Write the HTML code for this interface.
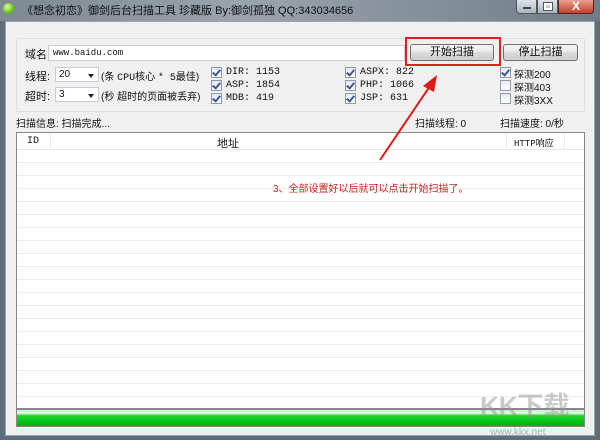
<!DOCTYPE html>
<html><head><meta charset="utf-8"><style>
*{margin:0;padding:0;box-sizing:border-box}
body{width:600px;height:440px;overflow:hidden;background:#5f6d7a;font-family:"Liberation Sans","Noto Sans CJK SC",sans-serif;font-size:11px;color:#111;position:relative}
.a{position:absolute;white-space:nowrap}
.mono{font-family:"Liberation Mono","Noto Sans CJK SC",monospace;font-size:10px}
.cb{position:absolute;width:11px;height:11px;border:1px solid #8f9aa6;background:linear-gradient(#e6e9ee,#fff)}
.cb.on::after{content:"";position:absolute;left:2px;top:0px;width:3px;height:6px;border:solid #3a5a96;border-width:0 2px 2px 0;transform:rotate(40deg)}
.btn{position:absolute;border:1px solid #707070;border-radius:3px;background:linear-gradient(#f6f6f6 0%,#e6e6e6 50%,#d8d8d8 51%,#cfcfcf 100%);text-align:center;font-size:11px;line-height:15px}
.sel{position:absolute;background:#fff;border:1px solid #c8ccd2;height:15px;font-size:10px;padding-left:3px;line-height:13px}
.sel::after{content:"";position:absolute;right:4px;top:6px;border:3px solid transparent;border-top:4px solid #222}
</style></head><body>
<div class="a" style="left:0;top:0;width:600px;height:21px;background:linear-gradient(90deg,#7d8892,#9aa4ad 40%,#6f7c88)"></div>
<div class="a" style="left:3px;top:3px;width:11px;height:11px;border-radius:50%;background:radial-gradient(circle at 40% 35%,#d8ff9a,#6cc61a 60%,#3c8a08)"></div>
<div class="a" style="left:22px;top:2px;font-size:11px;color:#111">《想念初恋》御剑后台扫描工具 珍藏版 By:御剑孤独 QQ:343034656</div>
<div class="a" style="left:516px;top:0;width:21px;height:14px;border:1px solid #555;border-top:0;border-radius:0 0 0 4px;background:linear-gradient(#dfe4ea,#a9b4c0)"><div class="a" style="left:6px;top:7px;width:8px;height:2px;background:#fff;border:1px solid #444"></div></div>
<div class="a" style="left:537px;top:0;width:21px;height:14px;border:1px solid #555;border-top:0;background:linear-gradient(#dfe4ea,#a9b4c0)"><div class="a" style="left:6px;top:3px;width:8px;height:7px;border:2px solid #fff;outline:1px solid #555"></div></div>
<div class="a" style="left:558px;top:0;width:36px;height:14px;border:1px solid #522;border-top:0;border-radius:0 0 4px 0;background:linear-gradient(#e8a090,#c4402a);color:#fff;font-weight:bold;font-size:12px;text-align:center;line-height:13px">X</div>
<div class="a" style="left:5px;top:21px;width:590px;height:415px;background:#f0f0f0;border:1px solid #9aa4ae"></div>
<div class="a" style="left:16px;top:38px;width:569px;height:74px;border:1px solid #d5dfe5;border-radius:2px"></div>
<div class="a" style="left:25px;top:46px;font-size:11px">域名:</div>
<div class="a mono" style="left:48px;top:45px;width:357px;height:16px;background:#fff;border:1px solid #c8ccd2;padding-left:4px;line-height:14px;font-size:9px">www.baidu.com</div>
<div class="a" style="left:405px;top:37px;width:96px;height:29px;border:2px solid #e02020"></div>
<div class="btn" style="left:410px;top:44px;width:84px;height:17px">开始扫描</div>
<div class="btn" style="left:503px;top:44px;width:75px;height:17px">停止扫描</div>
<div class="a" style="left:25px;top:68px;font-size:11px">线程:</div>
<div class="sel" style="left:55px;top:67px;width:44px">20</div>
<div class="a" style="left:101px;top:68px;font-size:10px">(条 <span class="mono">CPU</span>核心 <span class="mono">* 5</span>最佳)</div>
<div class="a" style="left:25px;top:88px;font-size:11px">超时:</div>
<div class="sel" style="left:55px;top:87px;width:44px">3</div>
<div class="a" style="left:101px;top:88px;font-size:10px">(秒 超时的页面被丢弃)</div>
<div class="cb on" style="left:211px;top:67px"></div><div class="a mono" style="left:226px;top:67px">DIR: 1153</div>
<div class="cb on" style="left:211px;top:80px"></div><div class="a mono" style="left:226px;top:80px">ASP: 1854</div>
<div class="cb on" style="left:211px;top:93px"></div><div class="a mono" style="left:226px;top:93px">MDB: 419</div>
<div class="cb on" style="left:345px;top:67px"></div><div class="a mono" style="left:360px;top:67px">ASPX: 822</div>
<div class="cb on" style="left:345px;top:80px"></div><div class="a mono" style="left:360px;top:80px">PHP: 1066</div>
<div class="cb on" style="left:345px;top:93px"></div><div class="a mono" style="left:360px;top:93px">JSP: 631</div>
<div class="cb on" style="left:500px;top:67px"></div><div class="a" style="left:514px;top:66px;font-size:10px">探测200</div>
<div class="cb" style="left:500px;top:80px"></div><div class="a" style="left:514px;top:79px;font-size:10px">探测403</div>
<div class="cb" style="left:500px;top:93px"></div><div class="a" style="left:514px;top:92px;font-size:10px">探测3XX</div>
<div class="a" style="left:16px;top:115px;font-size:10px">扫描信息: 扫描完成...</div>
<div class="a" style="left:415px;top:115px;font-size:10px">扫描线程: 0</div>
<div class="a" style="left:500px;top:115px;font-size:10px">扫描速度: 0/秒</div>
<div class="a" style="left:16px;top:132px;width:569px;height:277px;background:#fff;border:1px solid #828790;overflow:hidden">
<div class="a" style="left:0;top:0;width:567px;height:17px;border-bottom:1px solid #e5e5e5"></div>
<div class="a mono" style="left:10px;top:3px">ID</div>
<div class="a" style="left:200px;top:2px">地址</div>
<div class="a mono" style="left:497px;top:3px;font-size:9px">HTTP响应</div>
<div class="a" style="left:33px;top:0;width:1px;height:277px;background:#ececec"></div>
<div class="a" style="left:489px;top:0;width:1px;height:277px;background:#ececec"></div>
<div class="a" style="left:547px;top:0;width:1px;height:277px;background:#ececec"></div>
<div class="a" style="left:0;top:17px;width:567px;height:260px;background:repeating-linear-gradient(#fff 0 12px,#ececec 12px 13px)"></div>
</div>
<div class="a" style="left:273px;top:180px;color:#d02020;font-size:10px">3、全部设置好以后就可以点击开始扫描了。</div>
<svg class="a" style="left:0;top:0" width="600" height="440"><line x1="380" y1="160" x2="430" y2="86" stroke="#e01818" stroke-width="2"/><polygon points="437,75 423,86 434,92" fill="#e01818"/></svg>
<div class="a" style="left:16px;top:409px;width:569px;height:18px;border:1px solid #888;background:linear-gradient(#bff0c0 0,#e8fbe8 20%,#22d32a 35%,#07c51a 70%,#0aa818 100%)"></div>
<div class="a" style="left:480px;top:386px;font-size:26px;font-weight:bold;color:rgba(150,150,150,.5)">KK下载</div>
<div class="a" style="left:490px;top:427px;font-size:10px;color:rgba(150,150,150,.7)">www.kkx.net</div>
</body></html>
